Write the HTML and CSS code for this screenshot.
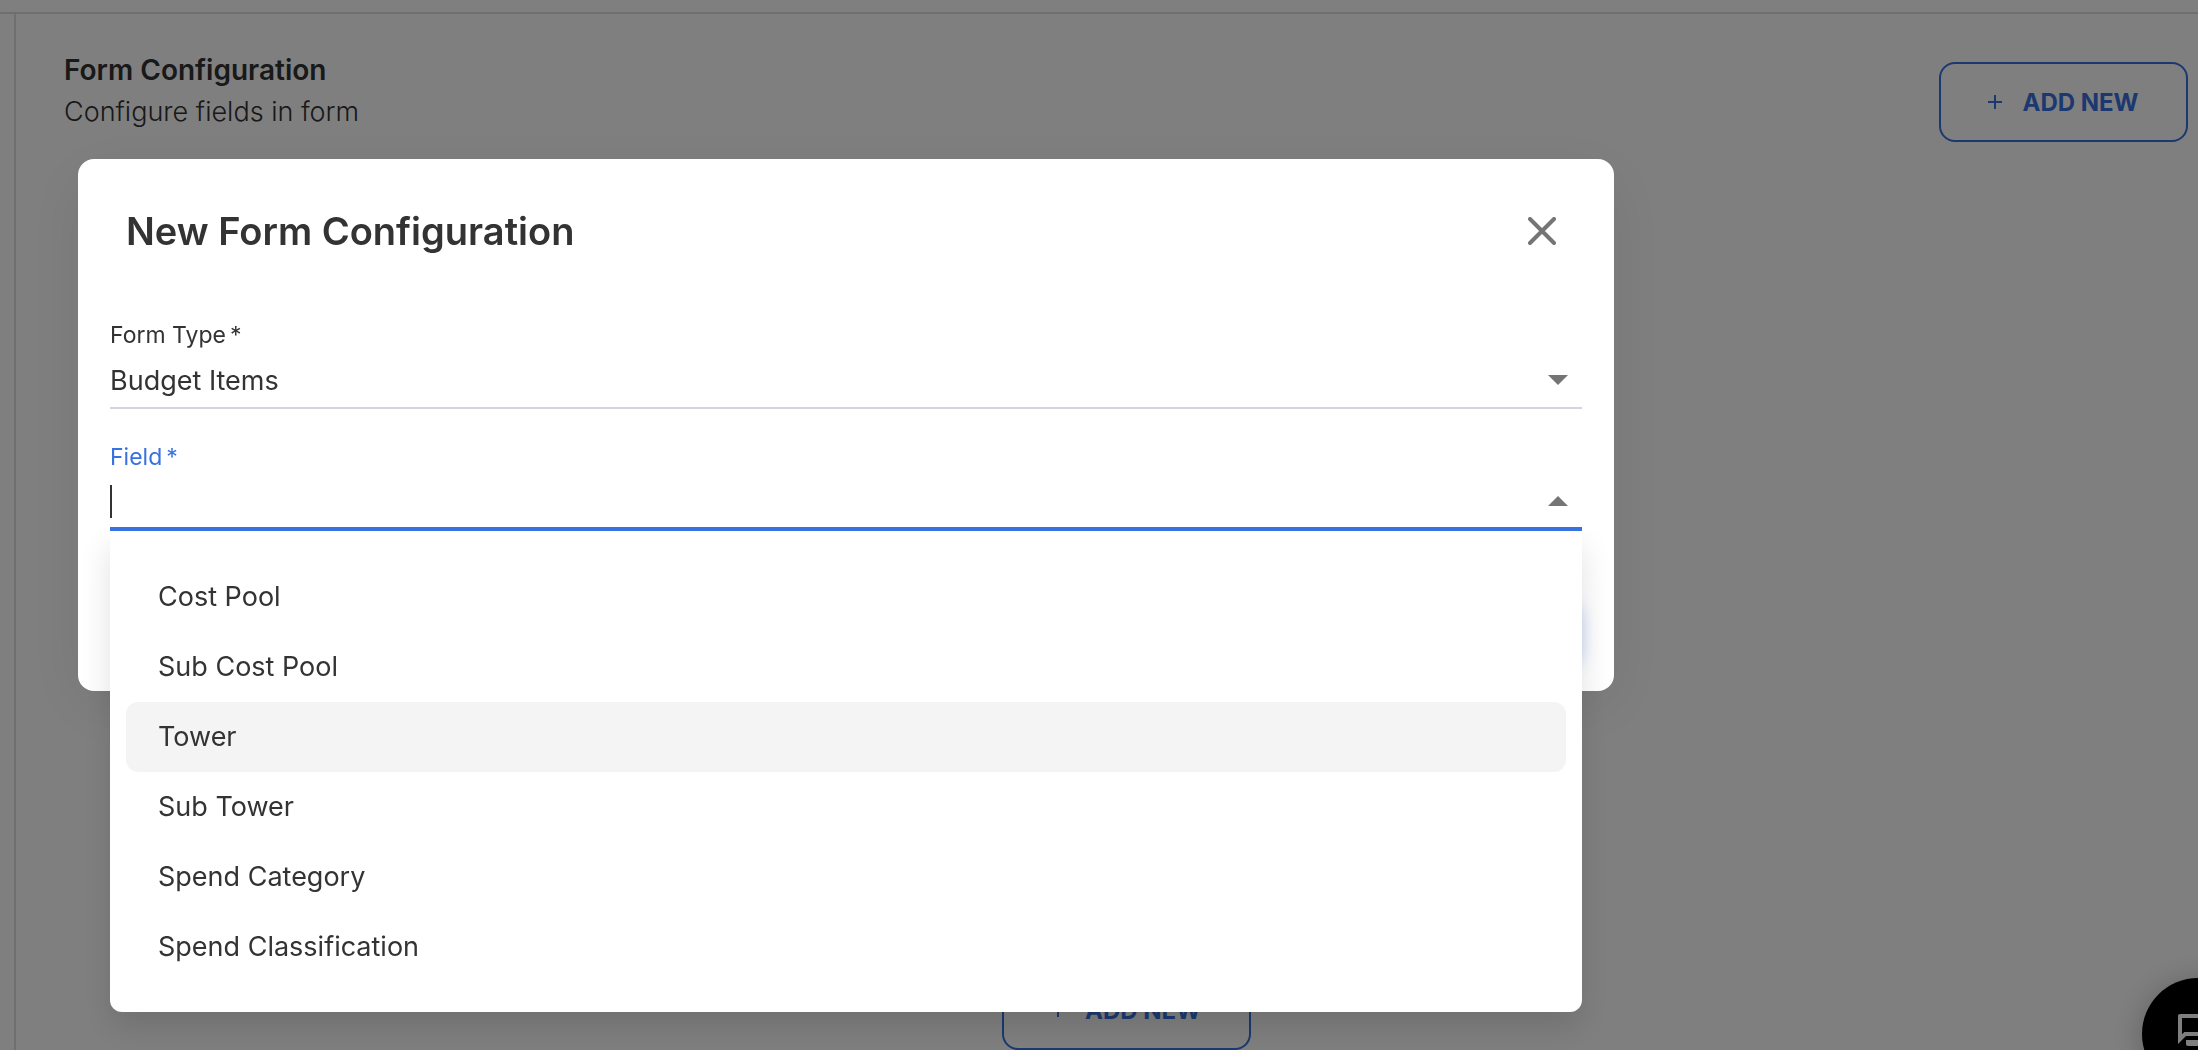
FILE: index.html
```html
<!DOCTYPE html>
<html lang="en">
<head>
  <meta charset="utf-8">
  <title>Form Configuration</title>
  <meta name="viewport" content="width=device-width, initial-scale=1">
  <link rel="stylesheet" href="styles.css">
</head>
<body>
  <div class="page">
    <div class="topbar"></div>
    <div class="layout">
      <div class="sidebar"></div>
      <main class="main">
        <div class="section-header">
          <div>
            <h1 class="section-title">Form Configuration</h1>
            <p class="section-text">Configure fields in form</p>
          </div>
          <button class="add-button" type="button">
            <svg width="14" height="14" viewBox="0 0 14 14"><path d="M7 0v14M0 7h14" stroke="currentColor" stroke-width="2"/></svg>
            ADD NEW
          </button>
        </div>
        <div class="section-footer">
          <button class="add-button" type="button">
            <svg width="14" height="14" viewBox="0 0 14 14"><path d="M7 0v14M0 7h14" stroke="currentColor" stroke-width="2"/></svg>
            ADD NEW
          </button>
        </div>
      </main>
    </div>
    <button class="chat-button" type="button" aria-label="Chat">
      <svg width="48" height="48" viewBox="0 0 24 24" fill="currentColor"><path d="M15 4v7H5.17L4 12.17V4h11m1-2H3c-.55 0-1 .45-1 1v14l4-4h10c.55 0 1-.45 1-1V3c0-.55-.45-1-1-1zm5 4h-2v9H6v2c0 .55.45 1 1 1h11l4 4V7c0-.55-.45-1-1-1z"/></svg>
    </button>
  </div>

  <div class="backdrop">
    <div class="modal" role="dialog" aria-labelledby="modalTitle">
      <div class="modal-header">
        <h2 class="modal-title" id="modalTitle">New Form Configuration</h2>
        <button class="close-button" type="button" aria-label="Close">
          <svg width="28" height="28" viewBox="0 0 28 28"><path d="M2 2l24 24M26 2L2 26" stroke="currentColor" stroke-width="4" stroke-linecap="round"/></svg>
        </button>
      </div>

      <form class="modal-body">
        <div class="field">
          <label class="label" for="formType">Form Type<span class="required">*</span></label>
          <div class="control">
            <select class="input" id="formType">
              <option>Budget Items</option>
            </select>
            <svg class="arrow" width="20" height="10" viewBox="0 0 20 10"><path d="M0 0h20L10 10z" fill="currentColor"/></svg>
          </div>
        </div>

        <div class="field active">
          <label class="label" for="fieldName">Field<span class="required">*</span></label>
          <div class="control">
            <input class="input" id="fieldName" type="text" role="combobox" aria-expanded="true" aria-controls="fieldOptions">
            <span class="caret"></span>
            <svg class="arrow" width="20" height="10" viewBox="0 0 20 10"><path d="M0 10h20L10 0z" fill="currentColor"/></svg>
          </div>
          <ul class="options" id="fieldOptions" role="listbox">
            <li class="option" role="option">Cost Pool</li>
            <li class="option" role="option">Sub Cost Pool</li>
            <li class="option highlighted" role="option">Tower</li>
            <li class="option" role="option">Sub Tower</li>
            <li class="option" role="option">Spend Category</li>
            <li class="option" role="option">Spend Classification</li>
          </ul>
        </div>
      </form>

      <div class="modal-footer">
        <button class="save-button" type="button" aria-label="Save"></button>
      </div>
    </div>
  </div>
</body>
</html>
```
FILE: styles.css
```css
* { box-sizing: border-box; }
body {
  font-family: Inter, "Liberation Sans", sans-serif;
  font-size: 27px;
  color: #333;
  margin: 0;
  overflow: hidden;
}
h1, h2, p, ul { margin: 0; padding: 0; }
button, input, select { font-family: inherit; color: inherit; }

/* Page */
.page { display: flex; flex-direction: column; height: 100vh; background: #fff; }
.topbar { height: 14px; border-bottom: 2px solid #dedede; }
.layout { display: flex; flex: 1; }
.sidebar { width: 16px; border-right: 2px solid #dedede; }
.main {
  display: flex;
  flex: 1;
  flex-direction: column;
  justify-content: space-between;
  padding: 35px 10px 0 48px;
}
.section-header { display: flex; justify-content: space-between; align-items: flex-end; }
.section-title { font-size: 28px; line-height: 42px; font-weight: 600; }
.section-text { line-height: 42px; font-weight: 300; padding-bottom: 9px; }
.section-footer { display: flex; justify-content: center; }
.add-button {
  display: flex;
  align-items: center;
  justify-content: center;
  gap: 20px;
  width: 249px;
  height: 80px;
  border: 2px solid #3871e0;
  border-radius: 16px;
  background: none;
  color: #3871e0;
  font-size: 24px;
  font-weight: 700;
  cursor: pointer;
}
.chat-button {
  position: fixed;
  right: -56px;
  bottom: -40px;
  display: flex;
  align-items: center;
  justify-content: center;
  width: 112px;
  height: 112px;
  padding: 0;
  border: none;
  border-radius: 50%;
  background: #000;
  color: #fff;
  box-shadow: 0 4px 32px rgba(0, 0, 0, 0.25);
}

/* Modal */
.backdrop {
  position: fixed;
  inset: 0;
  padding: 159px 78px 0;
  background: rgba(0, 0, 0, 0.5);
}
.modal {
  max-width: 1536px;
  border-radius: 16px;
  background: #fff;
  box-shadow: 0 16px 64px rgba(0, 0, 0, 0.08);
}
.modal-header {
  display: flex;
  align-items: center;
  justify-content: space-between;
  height: 144px;
  padding: 0 58px 0 48px;
}
.modal-title { font-size: 38px; line-height: 48px; font-weight: 600; }
.close-button { display: flex; padding: 0; border: none; background: none; color: #757575; cursor: pointer; }
.modal-body { display: flex; flex-direction: column; gap: 32px; padding: 16px 32px 0; }
.modal-footer { display: flex; justify-content: flex-end; padding: 64px 32px 32px; }
.save-button {
  width: 160px;
  height: 64px;
  border: none;
  border-radius: 16px;
  background: #3871e0;
  box-shadow: 0 8px 16px rgba(56, 113, 224, 0.3);
}

/* Fields */
.field { position: relative; }
.label { display: block; font-size: 23px; line-height: 32px; }
.required { margin-left: 4px; }
.control {
  position: relative;
  display: flex;
  align-items: center;
  height: 58px;
  padding-top: 2px;
  border-bottom: 2px solid #d2d6dc;
}
.input {
  appearance: none;
  width: 100%;
  height: 100%;
  padding: 0;
  border: none;
  outline: none;
  background: none;
  font-size: 27px;
}
.arrow { position: absolute; right: 14px; color: #757575; pointer-events: none; }
.caret { position: absolute; left: 0; width: 2px; height: 33px; background: #333; }
.active .label { color: #3871e0; }
.active .control { border-bottom: 4px solid #3871e0; }

/* Dropdown */
.options {
  position: absolute;
  top: 100%;
  left: 0;
  right: 0;
  padding: 31px 16px 30px;
  border-radius: 0 0 12px 12px;
  background: #fff;
  box-shadow: 0 16px 32px rgba(0, 0, 0, 0.12);
  clip-path: inset(0 -80px -80px);
  list-style: none;
}
.option { padding: 0 32px; border-radius: 12px; line-height: 70px; }
.highlighted { background: #f4f4f4; }
```
